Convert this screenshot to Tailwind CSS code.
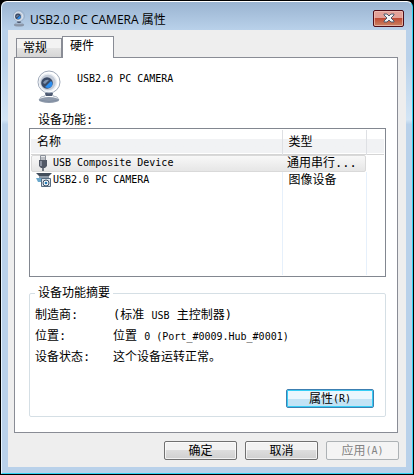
<!DOCTYPE html>
<html lang="zh-CN">
<head>
    <meta charset="UTF-8">
    <meta name="viewport" content="width=device-width, initial-scale=1.0">
    <title>USB2.0 PC CAMERA 属性</title>
    <script src="https://cdn.jsdelivr.net/npm/@tailwindcss/browser@4"></script>
</head>
<body class="min-h-screen bg-black p-px flex text-black text-[12px] leading-4 font-['DejaVu_Sans_Mono','Noto_Sans_CJK_SC',monospace]">

    <!-- Shared webcam drawing -->
    <svg class="hidden">
        <defs>
            <linearGradient id="metal" x1="0" y1="0" x2="1" y2="1">
                <stop offset="0" stop-color="#eef2f7"/>
                <stop offset="0.5" stop-color="#aeb8c8"/>
                <stop offset="1" stop-color="#6f7b90"/>
            </linearGradient>
            <symbol id="webcam" viewBox="0 0 24 34">
                <ellipse cx="12" cy="30" rx="10" ry="3" fill="#8f9aab"/>
                <path d="M2 30q1-4 6-4l1-3h6l1 3q5 0 6 4-10 3-20 0z" fill="url(#metal)" stroke="#76849a" stroke-width=".6"/>
                <path d="M8 23h8l-1 3H9z" fill="#4c5870"/>
                <circle cx="12" cy="12" r="11" fill="url(#metal)" stroke="#8793a7" stroke-width=".8"/>
                <circle cx="11" cy="12.500" r="8.500" fill="#c3cbd8" stroke="#e9edf3" stroke-width="1.500"/>
                <circle cx="10" cy="13" r="5.800" fill="#3a4a66"/>
                <path d="M8 17l6-6q3 3 0 6-3 2-6 0z" fill="#2b8df0"/>
                <path d="M6 13q2-4 6-3l-4 4z" fill="#7f92ad"/>
            </symbol>
        </defs>
    </svg>

    <main class="flex-1 min-w-0 flex flex-col rounded-t-md border border-t-white border-l-[#e6f4ff] border-r-[#2fd3f3] border-b-[#2fd3f3] bg-linear-to-b from-[#b9d1ea] from-12% via-[#d3e5f5] via-25% to-[#b9d1ea] to-26% px-[6px] pb-[6px]">

        <!-- Title bar -->
        <header class="h-7 -mx-[6px] px-2 flex items-center rounded-t-md bg-linear-to-b from-[#9ab4d1] to-[#b9d1ea]">
            <svg class="w-4 h-[17px] mt-1 ml-px"><use href="#webcam"/></svg>
            <h1 class="ml-[3px] mt-2 flex-1 font-['Open_Sans','Noto_Sans_CJK_SC',sans-serif]">USB2.0 PC CAMERA 属性</h1>
            <button type="button" aria-label="关闭" class="mt-1 w-[31px] h-[17px] flex items-center justify-center rounded-xs border border-[#4e0d18] bg-linear-to-b from-[#e3a198] from-50% via-[#bf4a35] via-50% to-[#c98262] inset-ring inset-ring-[#f1c4bb]/70">
                <svg class="w-3 h-[10px]" viewBox="0 0 12 10">
                    <path d="M1 1h3l2 2 2-2h3v1L8 5l3 3v1H8L6 7 4 9H1V8l3-3-3-3z" fill="#f4f6f8" stroke="#515a6b"/>
                </svg>
            </button>
        </header>

        <div class="flex-1 flex flex-col bg-[#eeeeee] pt-[6px] pl-[6px] pr-2 pb-[7px]">

            <!-- Tabs -->
            <nav role="tablist" class="relative z-10 -mb-px ml-px flex items-end">
                <button type="button" role="tab" class="h-[19px] mb-px ml-px w-[46px] border border-b-0 border-[#898c95] bg-linear-to-b from-[#f3f3f3] from-50% via-[#e4e4e4] via-50% to-[#d5d5d5] pr-2">常规</button>
                <button type="button" role="tab" aria-selected="true" class="h-[22px] w-[52px] border border-b-0 border-[#898c95] bg-white pr-3 pb-1">硬件</button>
            </nav>

            <section role="tabpanel" class="flex-1 border border-[#898c95] bg-white pl-[14px] pr-[11px] pb-[14px]">
                <div class="flex gap-4 pl-2 pt-3">
                    <svg class="w-6 h-[34px]"><use href="#webcam"/></svg>
                    <p class="pt-px text-[10px]">USB2.0 PC CAMERA</p>
                </div>

                <h2 class="mt-2 pl-[9px]">设备功能:</h2>

                <!-- Device list -->
                <div class="h-[149px] border border-[#828790] p-px">
                    <table class="w-full table-fixed border-collapse">
                        <colgroup>
                            <col>
                            <col class="w-[84px]">
                            <col class="w-[18px]">
                        </colgroup>
                        <thead>
                            <tr class="h-6 border-b border-[#d5d5d5] bg-linear-to-b from-white from-40% to-[#f1f2f4] to-40% text-left">
                                <th class="pl-[6px] font-normal border-r border-[#dee0e4]">名称</th>
                                <th class="pl-[6px] font-normal border-r border-[#dee0e4]">类型</th>
                                <th></th>
                            </tr>
                        </thead>
                        <tbody>
                            <tr class="h-[17px]">
                                <td colspan="2" class="p-0">
                                    <div class="h-[17px] flex items-center rounded-xs border border-[#d9d9d9] bg-linear-to-b from-[#f8f8f8] to-[#e6e6e6]">
                                        <svg class="w-4 h-4 ml-[3px] mr-[2px]" viewBox="0 0 16 16">
                                            <path d="M5.500.5h5v5h-5z" fill="#e8eaed" stroke="#8b9099"/>
                                            <path d="M7 2v3M9 2v3" stroke="#8b9099"/>
                                            <path d="M4 5h8v6l-2 2H6l-2-2z" fill="#525966"/>
                                            <path d="M5 6h2v5H5z" fill="#8a919f"/>
                                            <path d="M7 13h2v3H7z" fill="#707782"/>
                                        </svg>
                                        <span class="flex-1 text-[10px]">USB Composite Device</span>
                                        <span class="w-[78px]">通用串行...</span>
                                    </div>
                                </td>
                                <td></td>
                            </tr>
                            <tr class="h-[17px]">
                                <td class="p-0 border-r border-[#e6f0fb]">
                                    <div class="flex items-center pl-1">
                                        <svg class="w-[18px] h-4" viewBox="0 0 18 16">
                                            <path d="M1 1h16l-3 3H4z" fill="#434e5c"/>
                                            <path d="M4 4h10v2H4z" fill="#8d9aa8"/>
                                            <path d="M1 6h6v4H3z" fill="#6aa8cc"/>
                                            <path d="M6.500 6.500h9v8h-9z" fill="#dce6ef" stroke="#586d82"/>
                                            <circle cx="11" cy="11" r="3" fill="#f2f6fa" stroke="#3e5064"/>
                                            <circle cx="11" cy="11" r="1.300" fill="#287eb8"/>
                                        </svg>
                                        <span class="text-[10px]">USB2.0 PC CAMERA</span>
                                    </div>
                                </td>
                                <td class="p-0 pl-[6px] border-r border-[#e6f0fb]">图像设备</td>
                                <td></td>
                            </tr>
                            <tr class="h-[86px]">
                                <td class="border-r border-[#e6f0fb]"></td>
                                <td class="border-r border-[#e6f0fb]"></td>
                                <td></td>
                            </tr>
                        </tbody>
                    </table>
                </div>

                <!-- Summary -->
                <fieldset class="mt-2 rounded-xs border border-[#d5dfe5] px-[5px] pb-2">
                    <legend class="px-[3px]">设备功能摘要</legend>
                    <dl class="grid grid-cols-[78px_1fr] gap-y-1 pt-[6px]">
                        <dt>制造商:</dt>
                        <dd>(标准 <span class="text-[10px]">USB</span> 主控制器)</dd>
                        <dt>位置:</dt>
                        <dd>位置 <span class="text-[10px]">0 (Port_#0009.Hub_#0001)</span></dd>
                        <dt>设备状态:</dt>
                        <dd>这个设备运转正常。</dd>
                    </dl>
                    <div class="mt-6 flex justify-end pr-[6px]">
                        <button type="button" class="w-[88px] h-[19px] flex items-center justify-center rounded-xs border border-[#3c7fb1] bg-linear-to-b from-[#eaf6fd] from-50% to-[#c2e3f5] to-50% inset-ring inset-ring-[#35cdf5]">属性<span class="text-[10px]">(R)</span></button>
                    </div>
                </fieldset>
            </section>

            <!-- Dialog buttons -->
            <footer class="mt-2 -mr-px flex justify-end gap-2">
                <button type="button" class="w-[73px] h-[19px] flex items-center justify-center rounded-xs border border-[#707070] bg-linear-to-b from-[#f2f2f2] from-50% via-[#dddddd] via-50% to-[#cfcfcf] inset-ring inset-ring-white/70">确定</button>
                <button type="button" class="w-[73px] h-[19px] flex items-center justify-center rounded-xs border border-[#707070] bg-linear-to-b from-[#f2f2f2] from-50% via-[#dddddd] via-50% to-[#cfcfcf] inset-ring inset-ring-white/70">取消</button>
                <button type="button" disabled class="w-[73px] h-[19px] flex items-center justify-center rounded-xs border border-[#adb2b5] bg-[#f4f4f4] text-[#838383]">应用<span class="text-[10px]">(A)</span></button>
            </footer>
        </div>
    </main>

</body>
</html>
